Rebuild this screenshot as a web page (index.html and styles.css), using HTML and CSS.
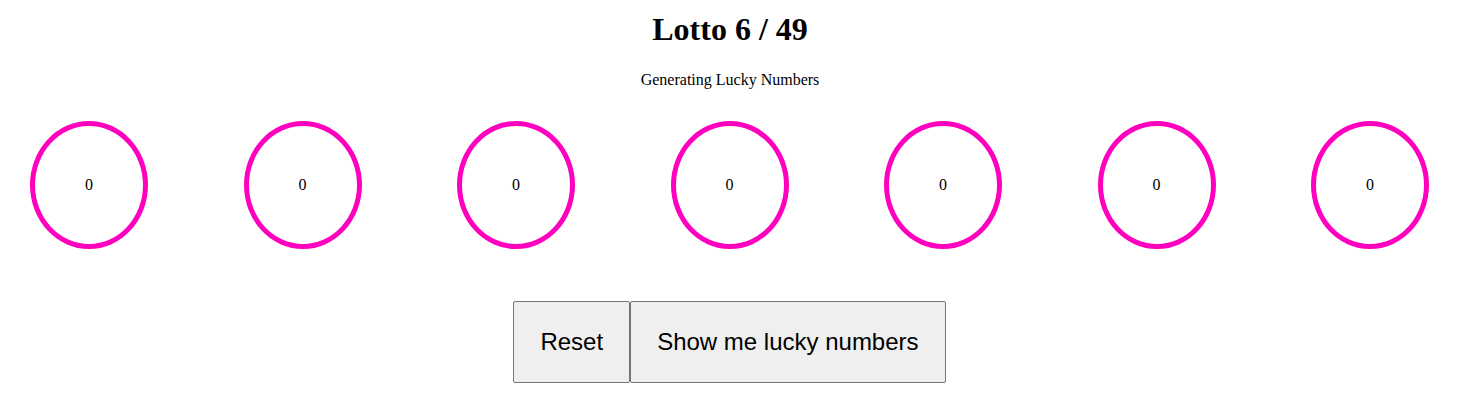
FILE: index.html
```html
<!DOCTYPE html>
<html>
<head>
<meta charset="utf-8">
<link rel="stylesheet" href="styles.css">
</head>
<body>
<h1 class="title">Lotto 6 / 49</h1>
<p class="subtitle">Generating Lucky Numbers</p>
<div class="balls">
  <div class="ball">0</div>
  <div class="ball">0</div>
  <div class="ball">0</div>
  <div class="ball">0</div>
  <div class="ball">0</div>
  <div class="ball">0</div>
  <div class="ball">0</div>
</div>
<div class="actions"><button class="btn">Reset</button><button class="btn">Show me lucky numbers</button></div>
</body>
</html>
```
FILE: styles.css
```css
body {
  margin: 8px;
  font-family: "Liberation Serif", "Times New Roman", serif;
  background: #fff;
  color: #000;
}
.title {
  margin: 3px 0 0;
  padding-right: 2px;
  font-size: 32px;
  font-weight: bold;
  text-align: center;
}
.subtitle {
  margin: 23px 0 0;
  padding-right: 2px;
  font-size: 16px;
  text-align: center;
}
.balls {
  display: flex;
  justify-content: space-between;
  margin-top: 32px;
  padding: 0 25px 0 22px;
}
.ball {
  width: 108px;
  height: 118px;
  border: 5px solid #ff00bf;
  border-radius: 50%;
  display: flex;
  align-items: center;
  justify-content: center;
  font-size: 16px;
}
.actions {
  display: flex;
  justify-content: center;
  margin-top: 52px;
  padding-right: 3px;
}
.btn {
  font-family: "Liberation Sans", Arial, sans-serif;
  font-size: 24px;
  padding: 26px;
  background: #efefef;
  border: 1px solid #767676;
  border-radius: 2px;
  color: #000;
  margin: 0;
}
```
